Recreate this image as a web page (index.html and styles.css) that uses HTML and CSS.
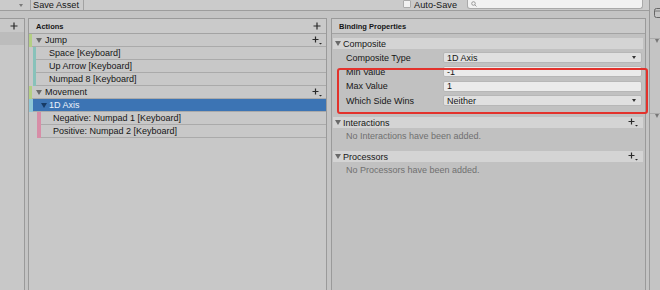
FILE: index.html
```html
<!DOCTYPE html>
<html>
<head>
  <meta charset="UTF-8">
  <title>Input Actions</title>
  <link rel="stylesheet" href="styles.css">
</head>
<body>
  <div class="window">
    <div class="main">

      <!-- Toolbar -->
      <div class="toolbar">
        <span class="tool-menu"><span class="tri small"></span></span>
        <span class="tool-button">Save Asset</span>
        <span class="spacer"></span>
        <span class="autosave"><span class="checkbox"></span>Auto-Save</span>
        <span class="search">
          <svg width="6" height="6" viewBox="0 0 6 6"><circle cx="2.5" cy="2.5" r="1.8" fill="none" stroke="#888" stroke-width="0.8"/><path d="M3.8 3.8L5.5 5.5" stroke="#888" stroke-width="0.8"/></svg>
        </span>
      </div>

      <div class="panes">

        <!-- Action maps -->
        <div class="maps">
          <div class="maps-head">
            <svg class="plus" width="8" height="8" viewBox="0 0 8 8"><path d="M4 0.5v7M0.5 4h7" stroke="#2a2a2a" stroke-width="1.2"/></svg>
          </div>
          <div class="map-row"></div>
        </div>

        <!-- Actions -->
        <div class="actions">
          <div class="pane-head">
            <span>Actions</span>
            <svg class="plus" width="8" height="8" viewBox="0 0 8 8"><path d="M4 0.5v7M0.5 4h7" stroke="#2a2a2a" stroke-width="1.2"/></svg>
          </div>

          <div class="row action">
            <span class="bar green"></span><span class="tri"></span><span class="name">Jump</span>
            <svg class="plus drop" width="10" height="9" viewBox="0 0 10 9"><path d="M3.5 0.5v6M0.5 3.5h6" stroke="#2a2a2a" stroke-width="1.2"/><path d="M7 7h3l-1.5 1.6z" fill="#2a2a2a"/></svg>
          </div>
          <div class="row binding"><span class="bar teal"></span><span class="name">Space [Keyboard]</span></div>
          <div class="row binding"><span class="bar teal"></span><span class="name">Up Arrow [Keyboard]</span></div>
          <div class="row binding"><span class="bar teal"></span><span class="name">Numpad 8 [Keyboard]</span></div>

          <div class="row action">
            <span class="bar green"></span><span class="tri"></span><span class="name">Movement</span>
            <svg class="plus drop" width="10" height="9" viewBox="0 0 10 9"><path d="M3.5 0.5v6M0.5 3.5h6" stroke="#2a2a2a" stroke-width="1.2"/><path d="M7 7h3l-1.5 1.6z" fill="#2a2a2a"/></svg>
          </div>
          <div class="row composite selected"><span class="bar sky"></span><span class="tri"></span><span class="name">1D Axis</span></div>
          <div class="row part"><span class="bar pink"></span><span class="name">Negative: Numpad 1 [Keyboard]</span></div>
          <div class="row part"><span class="bar pink"></span><span class="name">Positive: Numpad 2 [Keyboard]</span></div>
        </div>

        <!-- Binding properties -->
        <div class="props">
          <div class="pane-head">
            <span>Binding Properties</span>
          </div>
          <div class="props-body">
            <div class="section-head"><span class="tri"></span>Composite</div>
            <div class="fields">
              <div class="field-row">
                <span class="label">Composite Type</span>
                <span class="field dropdown">1D Axis<span class="tri arrow"></span></span>
              </div>
              <div class="field-row">
                <span class="label">Min Value</span>
                <span class="field text">-1</span>
              </div>
              <div class="field-row">
                <span class="label">Max Value</span>
                <span class="field text">1</span>
              </div>
              <div class="field-row">
                <span class="label">Which Side Wins</span>
                <span class="field dropdown">Neither<span class="tri arrow"></span></span>
              </div>
            </div>

            <div class="section-head spaced">
              <span class="tri"></span>Interactions<span class="spacer"></span>
              <svg class="plus drop" width="10" height="9" viewBox="0 0 10 9"><path d="M3.5 0.5v6M0.5 3.5h6" stroke="#2a2a2a" stroke-width="1.2"/><path d="M7 7h3l-1.5 1.6z" fill="#2a2a2a"/></svg>
            </div>
            <div class="empty">No Interactions have been added.</div>

            <div class="section-head spaced-small">
              <span class="tri"></span>Processors<span class="spacer"></span>
              <svg class="plus drop" width="10" height="9" viewBox="0 0 10 9"><path d="M3.5 0.5v6M0.5 3.5h6" stroke="#2a2a2a" stroke-width="1.2"/><path d="M7 7h3l-1.5 1.6z" fill="#2a2a2a"/></svg>
            </div>
            <div class="empty">No Processors have been added.</div>
          </div>

          <!-- red annotation box -->
          <div class="highlight"></div>
        </div>

      </div>
    </div>

    <!-- Right strip -->
    <div class="side">
      <svg class="side-icon" width="6" height="10" viewBox="0 0 6 10"><rect x="0.5" y="0.5" width="10" height="9" rx="2" fill="none" stroke="#666" stroke-width="1"/><path d="M0.5 3h6" stroke="#666" stroke-width="0.8"/></svg>
      <div class="side-block first"><span class="tri"></span></div>
      <div class="side-block second"><span class="tri"></span></div>
    </div>
  </div>
</body>
</html>
```

FILE: styles.css
```css
body {
  margin: 0;
  width: 660px;
  height: 290px;
  overflow: hidden;
  background: #c4c4c4;
  font-family: 'Liberation Sans', Arial, sans-serif;
  font-size: 9px;
  color: #161616;
}

.window {
  display: flex;
  height: 290px;
}

.main {
  width: 649px;
  display: flex;
  flex-direction: column;
}

.spacer {
  flex: 1;
}

/* foldout triangle */
.tri {
  width: 0;
  height: 0;
  border-left: 3px solid transparent;
  border-right: 3px solid transparent;
  border-top: 5px solid #6a6a6a;
  flex: none;
}

.tri.small {
  border-left-width: 2.5px;
  border-right-width: 2.5px;
  border-top-width: 3px;
  border-top-color: #7a7a7a;
}

/* toolbar */
.toolbar {
  height: 10px;
  display: flex;
  align-items: stretch;
  background: #cbcbcb;
  border-bottom: 1px solid #9d9d9d;
  line-height: 10px;
}

.tool-menu {
  width: 30px;
  display: flex;
  justify-content: flex-end;
  align-items: center;
  padding-right: 7px;
  box-sizing: border-box;
}

.tool-button {
  padding: 0 4px 0 2px;
  border-left: 1px solid #a2a2a2;
  border-right: 1px solid #a2a2a2;
  font-size: 9.2px;
}

.autosave {
  display: flex;
  align-items: center;
  margin-right: 10px;
  font-size: 9.2px;
}

.checkbox {
  width: 8px;
  height: 8px;
  box-sizing: border-box;
  background: #f1f1f1;
  border: 1px solid #ababab;
  border-radius: 1px;
  margin: -3px 3px 0 0;
}

.search {
  width: 176px;
  height: 9px;
  box-sizing: border-box;
  background: #f2f2f2;
  border: 1px solid #aaaaaa;
  border-top: none;
  border-radius: 0 0 3px 3px;
  margin-right: 6px;
  padding-left: 3px;
  display: flex;
  align-items: center;
}

/* panes */
.panes {
  flex: 1;
  display: flex;
  margin-top: 7px;
  min-height: 0;
}

.maps {
  width: 25px;
  box-sizing: border-box;
  background: #c8c8c8;
  border-top: 1px solid #9a9a9a;
  border-right: 1px solid #9a9a9a;
}

.maps-head {
  height: 13px;
  display: flex;
  align-items: center;
  justify-content: flex-end;
  padding-right: 6px;
}

.map-row {
  height: 13px;
  background: #bcbcbc;
}

.actions {
  width: 299px;
  margin-left: 3px;
  box-sizing: border-box;
  background: #c8c8c8;
  border: 1px solid #9a9a9a;
  border-bottom: none;
}

.props {
  position: relative;
  width: 315px;
  margin-left: 4px;
  box-sizing: border-box;
  background: #c1c1c1;
  border: 1px solid #9a9a9a;
  border-bottom: none;
}

.pane-head {
  height: 14px;
  display: flex;
  align-items: center;
  justify-content: space-between;
  padding: 0 5px 0 7px;
  background: #cacaca;
  border-bottom: 1px solid #a3a3a3;
  font-size: 7.5px;
  font-weight: bold;
}

/* action tree rows */
.row {
  height: 12px;
  display: flex;
  align-items: center;
  border-bottom: 1px solid #aaaaaa;
}

.bar {
  align-self: flex-start;
  width: 3px;
  height: 13px;
  flex: none;
}

.bar.green { background: #b4cf84; }
.bar.teal { background: #88c2ba; }
.bar.sky { background: #8fc7d6; width: 4px; }
.bar.pink { background: #d78da7; width: 4px; }

.row .plus.drop {
  margin-left: auto;
  margin-right: 4px;
}

.row.action .tri {
  margin-left: 4px;
  margin-right: 3px;
}

.row.binding {
  margin-left: 4px;
}

.row.binding .name {
  margin-left: 13px;
}

.row.selected {
  background: #3c74b4;
  color: #eef3fb;
}

.row.composite .tri {
  margin-left: 8px;
  margin-right: 2px;
  border-top-color: #173b66;
}

.row.part {
  margin-left: 8px;
}

.row.part .name {
  margin-left: 12px;
}

/* binding properties */
.props-body {
  padding: 4px 2px 0 1px;
}

.section-head {
  height: 11px;
  display: flex;
  align-items: center;
  padding: 0 5px 0 2px;
  background: #d4d4d4;
}

.section-head .tri {
  margin-right: 2px;
}

.section-head.spaced {
  margin-top: 11px;
}

.section-head.spaced-small {
  margin-top: 9px;
}

.fields {
  display: flex;
  flex-direction: column;
  gap: 3.4px;
  padding: 3px 0 0 13px;
}

.field-row {
  display: flex;
  align-items: center;
  height: 11px;
}

.label {
  width: 97px;
  flex: none;
}

.field {
  width: 199px;
  height: 11px;
  box-sizing: border-box;
  display: flex;
  align-items: center;
  padding: 0 3px;
  border: 1px solid #b7b7b7;
  border-radius: 2px;
}

.field.dropdown {
  background: #e0e0e0;
}

.field.text {
  background: #ebebeb;
}

.tri.arrow {
  margin-left: auto;
  margin-right: 2px;
  border-left-width: 2px;
  border-right-width: 2px;
  border-top: 3px solid #333;
}

.empty {
  height: 12px;
  line-height: 12px;
  margin-top: 2px;
  padding-left: 13px;
  color: #707070;
}

.highlight {
  position: absolute;
  left: 5px;
  top: 49px;
  width: 311px;
  height: 46px;
  box-sizing: border-box;
  border: 2px solid #e3322c;
  border-radius: 3px;
}

/* right strip */
.side {
  width: 11px;
  box-sizing: border-box;
  border-left: 1px solid #9a9a9a;
  display: flex;
  flex-direction: column;
}

.side-icon {
  margin: 8px 0 0 4px;
}

.side-block {
  border-top: 1px solid #ababab;
  padding: 4px 0 0 5px;
}

.side-block .tri {
  border-left-width: 2px;
  border-right-width: 2px;
  border-top-width: 4px;
  border-top-color: #777;
}

.side-block.first {
  margin-top: 20px;
}

.side-block.second {
  margin-top: 60px;
}
```
